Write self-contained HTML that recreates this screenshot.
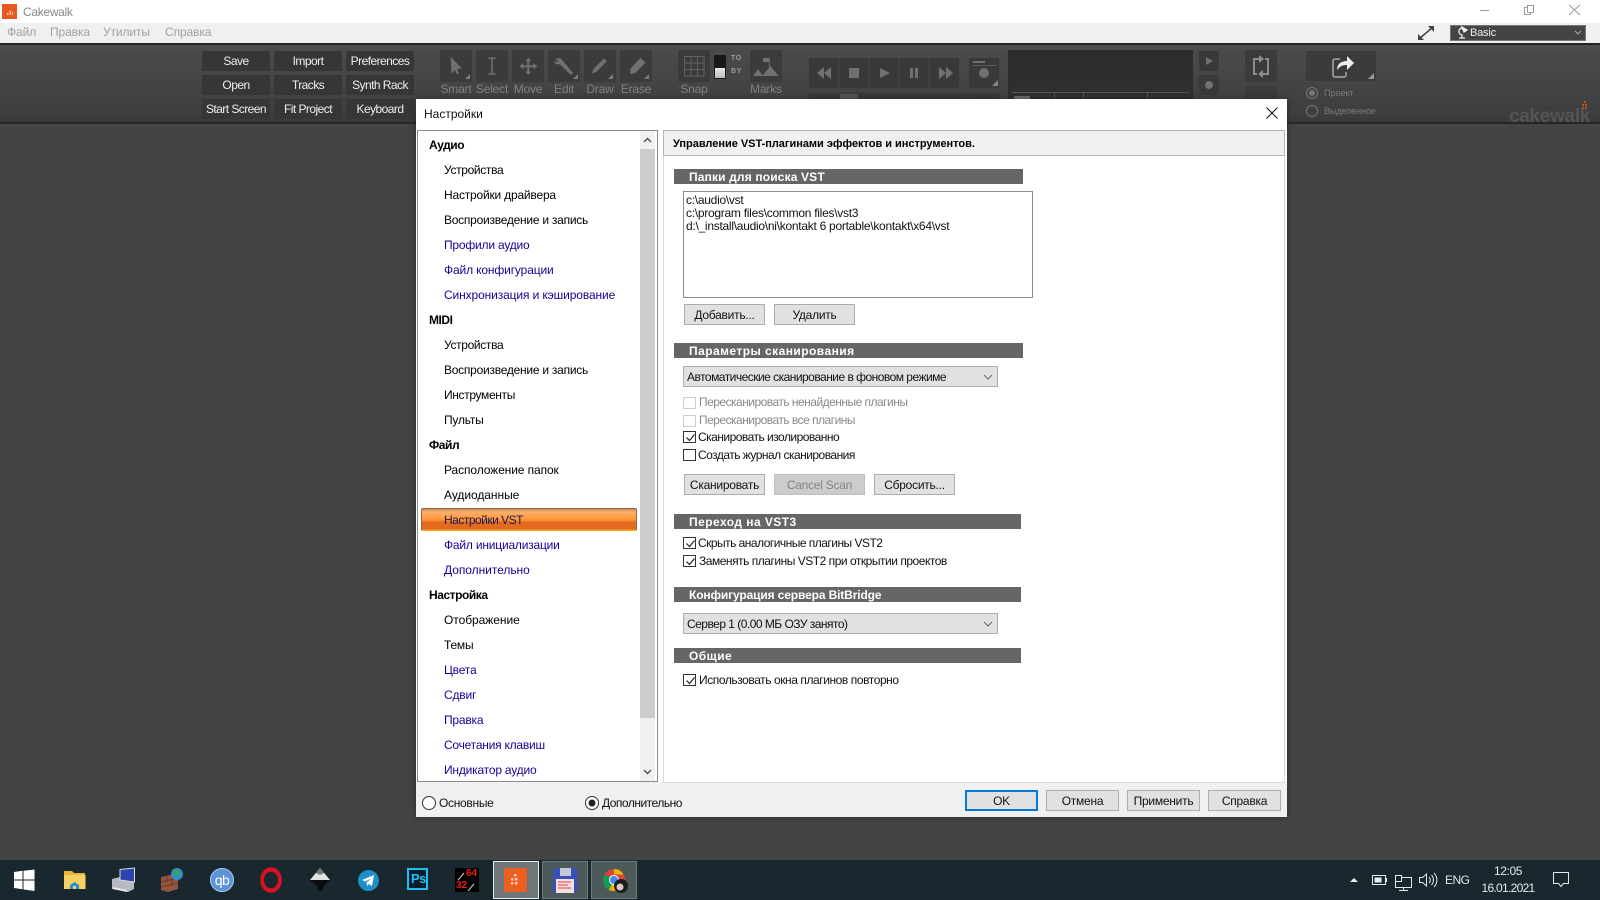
<!DOCTYPE html>
<html><head><meta charset="utf-8"><title>Cakewalk</title>
<style>
html,body{margin:0;padding:0;width:1600px;height:900px;overflow:hidden;background:#444}
*{box-sizing:border-box}
body{font-family:"Liberation Sans",sans-serif;font-size:12px;color:#000;position:relative}
.a,.t,.b,.tb,.li,.h,.sec,.btn,.cb,.cl,.lb{position:absolute;white-space:nowrap}
.tb{width:68px;height:20px;background:#343638;border-radius:2px;color:#eee;text-align:center;line-height:20px;font-size:12px;letter-spacing:-.55px}
.tool{position:absolute;top:50px;width:32px;height:32px;background:#393b3d;border-radius:2px}
.lb{top:83px;color:#808283;font-size:12px;line-height:13px;text-align:center;letter-spacing:-.2px;width:44px}
.li{left:444px;font-size:12px;line-height:14px;letter-spacing:-.2px;color:#000;transform:translateY(-7px)}
.li.p{color:#1a0098}
.h{left:429px;font-weight:bold;font-size:12px;line-height:14px;letter-spacing:-.45px;transform:translateY(-7px)}
.sec{left:674px;height:15px;background:#666;color:#fff;font-weight:bold;font-size:12px;line-height:17px;padding-left:15px;letter-spacing:.45px}
.btn{height:21px;background:#e1e1e1;border:1px solid #adadad;text-align:center;line-height:21px;font-size:12px;letter-spacing:-.25px;color:#111}
.cb{left:683px;width:315px;height:21px;background:#e1e1e1;border:1px solid #adadad;line-height:21px;padding-left:3px;letter-spacing:-.52px;color:#111}
.cb svg{position:absolute;right:2px;top:3px}
.cl{left:699px;line-height:14px;letter-spacing:-.52px;color:#111;transform:translateY(-7px)}
.cl.d{color:#888}
.x{position:absolute;left:683px;width:13px;height:12px;background:#fff;border:1px solid #333}
.x.d{border-color:#ccc}
.x svg{position:absolute;left:1px;top:0}
.ti{position:absolute;top:864px}
</style></head><body>

<!-- title bar -->
<div class="a" style="left:0;top:0;width:1600px;height:23px;background:#fff"></div>
<div class="a" style="left:2px;top:4px;width:15px;height:15px;background:#e9581f"></div>
<svg class="a" style="left:2px;top:4px" width="15" height="15"><path d="M5 9h1.500v2H5zM7.500 6.500H9V11H7.500zM10 8h1v3h-1z" fill="#f8c8a8"/></svg>
<div class="t" style="left:23px;top:5px;color:#8a8a8a;line-height:14px;letter-spacing:-.3px">Cakewalk</div>
<svg class="a" style="left:1480px;top:3px" width="110" height="18" fill="none" stroke="#999"><path d="M0 7.500h9M47.500 2.500h6v7h-6zM47.500 4.500h-3v7h6v-2M89 2l11 10M100 2L89 12"/></svg>

<!-- menu -->
<div class="a" style="left:0;top:23px;width:1600px;height:20px;background:#f0f0f0"></div>
<div class="t" style="left:7px;top:25px;color:#a0a0a0;line-height:14px;letter-spacing:-.1px">Файл</div>
<div class="t" style="left:50px;top:25px;color:#a0a0a0;line-height:14px;letter-spacing:-.1px">Правка</div>
<div class="t" style="left:103px;top:25px;color:#a0a0a0;line-height:14px;letter-spacing:-.1px">Утилиты</div>
<div class="t" style="left:165px;top:25px;color:#a0a0a0;line-height:14px;letter-spacing:-.1px">Справка</div>
<svg class="a" style="left:1417px;top:25px" width="18" height="16" fill="none" stroke="#444" stroke-width="1.500"><path d="M2 14L16 2"/><path d="M11 1h6v6L11 1zM1 9v6h6L1 9z" fill="#444" stroke="none"/></svg>
<div class="a" style="left:1450px;top:25px;width:136px;height:16px;background:#444;border:1px solid #777;color:#eee;line-height:14px;padding-left:19px;font-size:11px;letter-spacing:-.2px">Basic</div>
<svg class="a" style="left:1456px;top:26px" width="12" height="14" fill="none" stroke="#eee" stroke-width="1.300"><path d="M3 12h6M6 12V9C2 8 2 4 5 2l4 3"/><path d="M6 1l5 3-3 2z" fill="#eee"/></svg>
<svg class="a" style="left:1574px;top:30px" width="8" height="6" fill="none" stroke="#aaa"><path d="M1 1l3 3 3-3"/></svg>

<!-- toolbar -->
<div class="a" style="left:0;top:43px;width:1600px;height:81px;background:linear-gradient(#4b4d4e 2px,#484a4b 8px,#3c3e3f 70px,#37393a);border-top:2px solid #232323;border-bottom:2px solid #262626"></div>

<div class="tb" style="left:202px;top:51px">Save</div><div class="tb" style="left:274px;top:51px">Import</div><div class="tb" style="left:346px;top:51px">Preferences</div>
<div class="tb" style="left:202px;top:75px">Open</div><div class="tb" style="left:274px;top:75px">Tracks</div><div class="tb" style="left:346px;top:75px">Synth Rack</div>
<div class="tb" style="left:202px;top:99px">Start Screen</div><div class="tb" style="left:274px;top:99px">Fit Project</div><div class="tb" style="left:346px;top:99px">Keyboard</div>

<div class="tool" style="left:440px"></div><div class="tool" style="left:476px"></div><div class="tool" style="left:512px"></div><div class="tool" style="left:548px"></div><div class="tool" style="left:584px"></div><div class="tool" style="left:620px"></div><div class="tool" style="left:678px"></div><div class="tool" style="left:750px"></div>
<svg class="a" style="left:430px;top:45px" width="360" height="40" fill="#6f7172" stroke="none">
 <path d="M20.700 11.700L31.700 23.500 27 24l2 4.500-2 1-2-4.500-3.500 3.500z"/>
 <path d="M58.300 13.200h7.400M58.300 29h7.400M62 13.200V29" stroke="#6f7172" stroke-width="1.500" fill="none"/>
 <path d="M98.300 12.700l3 3.500h-2v4h4v-2l4 3-4 3v-2h-4v4.300h2l-3 3.500-3-3.500h2V22.200h-4v2l-4-3 4-3v2h4v-4h-2z"/>
 <path d="M125 15c2.500-2.500 6-2.500 7.500.5l10.500 12.500-2 2L129.500 19c-2.500 1-5 0-5.500-3l3 1.300 1.500-1.800z"/>
 <path d="M162 28.500l1.500-4.500L174 13.500l2.800 2.800L166.300 27z"/>
 <path d="M200 29l.5-5.500L210.500 13l5 4.500-10 10.500z"/>
 <path d="M35 34l5-5v5zM143 34l5-5v5zM178 34l5-5v5zM214 34l5-5v5z" fill="#7c7e7f"/>
 <path d="M254.500 11.500h19.500v19.500h-19.500zM261 11.500V31M267.500 11.500V31M254.500 18h19.500M254.500 24.500h19.500" stroke="#5f6162" fill="none"/>
 <path d="M333 13h6v4h-6z"/><path d="M339 13h.8v10H339z"/><path d="M332 31l8.500-10 8 10zM323 31l5-7 5 7z"/>
</svg>
<div class="a" style="left:714px;top:55px;width:12px;height:24px;background:#17181a;border-radius:1px"></div>
<div class="a" style="left:715px;top:68px;width:10px;height:10px;background:linear-gradient(#e8e8e8,#bbb)"></div>
<div class="t" style="left:731px;top:54px;font-size:7px;line-height:9px;color:#9a9c9d;font-weight:bold;letter-spacing:.6px">TO</div>
<div class="t" style="left:731px;top:67px;font-size:7px;line-height:9px;color:#9a9c9d;font-weight:bold;letter-spacing:.6px">BY</div>
<div class="lb" style="left:434px">Smart</div><div class="lb" style="left:470px">Select</div><div class="lb" style="left:506px">Move</div><div class="lb" style="left:542px">Edit</div><div class="lb" style="left:578px">Draw</div><div class="lb" style="left:614px">Erase</div><div class="lb" style="left:672px">Snap</div><div class="lb" style="left:744px">Marks</div>

<div class="a" style="left:809px;top:58px;width:150px;height:30px;background:#38393b;border-radius:2px"></div>
<div class="a" style="left:969px;top:58px;width:30px;height:30px;background:#38393b;border-radius:2px"></div>
<svg class="a" style="left:809px;top:58px" width="190" height="30" fill="#6e7071">
 <path d="M29.500 0h1v30h-1zM59.500 0h1v30h-1zM89.500 0h1v30h-1zM119.500 0h1v30h-1z" fill="#46484a"/>
 <path d="M15 9l-7 6 7 6zM22 9l-7 6 7 6z"/><path d="M40 10h10v10H40z"/><path d="M71 10l10 5-10 5z"/><path d="M101 10h3v10h-3zM106 10h3v10h-3z"/><path d="M130 9l7 6-7 6zM137 9l7 6-7 6z"/>
 <circle cx="175" cy="15" r="5"/><path d="M164 3h12v2h-12z"/><path d="M164 7h24v1h-24z" fill="#5a5c5d"/><path d="M183 28l6-6v6z" fill="#888"/>
</svg>
<div class="a" style="left:809px;top:93px;width:158px;height:8px;background:#38393b"></div>
<div class="a" style="left:840px;top:94px;width:18px;height:6px;background:#555"></div>
<div class="a" style="left:969px;top:93px;width:30px;height:8px;background:#38393b"></div>
<div class="a" style="left:1008px;top:50px;width:185px;height:52px;background:linear-gradient(#2a2b2c,#2f3031);border:1px solid #2c2d2e"></div>
<div class="a" style="left:1012px;top:92px;width:177px;height:1px;background:#555"></div>
<div class="a" style="left:1054px;top:92px;width:1px;height:8px;background:#555"></div>
<div class="a" style="left:1083px;top:92px;width:1px;height:8px;background:#555"></div>
<div class="a" style="left:1147px;top:92px;width:1px;height:8px;background:#555"></div>
<div class="a" style="left:1014px;top:96px;width:16px;height:3px;background:#6a6a6a"></div>
<div class="a" style="left:1199px;top:51px;width:20px;height:20px;background:#38393b;border-radius:2px"></div>
<div class="a" style="left:1199px;top:75px;width:20px;height:20px;background:#38393b;border-radius:2px"></div>
<svg class="a" style="left:1199px;top:51px" width="20" height="44" fill="#6e7071"><path d="M7 6l7 4-7 4z"/><circle cx="10" cy="34" r="4"/></svg>
<div class="a" style="left:1245px;top:50px;width:32px;height:32px;background:#393b3d;border-radius:2px"></div>
<div class="a" style="left:1245px;top:86px;width:32px;height:16px;background:#393b3d;border-radius:2px"></div>
<svg class="a" style="left:1245px;top:50px" width="32" height="32" fill="none" stroke="#8a8c8d" stroke-width="2"><path d="M14 9H9v15h3M18 24h5V9h-3"/><path d="M14 5l5 4-5 4z M18 28l-5-4 5-4z" fill="#8a8c8d" stroke="none"/></svg>
<div class="a" style="left:1306px;top:51px;width:70px;height:30px;background:#393b3d;border-radius:2px"></div>
<svg class="a" style="left:1306px;top:51px" width="70" height="30"><path d="M34 8h-5a2 2 0 00-2 2v14a2 2 0 002 2h9a2 2 0 002-2v-3" fill="none" stroke="#aaa" stroke-width="1.500"/><path d="M31 19c0-6 4-9 10-9V5l7 7-7 7v-5c-4 0-7 1-10 5z" fill="#eee"/><path d="M62 28l6-6v6z" fill="#999"/></svg>
<svg class="a" style="left:1305px;top:85px" width="16" height="34" fill="none" stroke="#777"><circle cx="7" cy="8" r="5.500"/><circle cx="7" cy="8" r="3" fill="#777" stroke="none"/><circle cx="7" cy="26" r="5.500"/></svg>
<div class="t" style="left:1324px;top:87px;font-size:9px;line-height:12px;color:#7a7c7d">Проект</div>
<div class="t" style="left:1324px;top:105px;font-size:9px;line-height:12px;color:#7a7c7d;letter-spacing:-.1px">Выделенное</div>
<div class="t" style="left:1509px;top:106px;font-size:19px;line-height:22px;color:#525455;letter-spacing:-.3px;font-weight:bold">cakewalk</div>
<svg class="a" style="left:1582px;top:101px" width="6" height="9" fill="#b05a20"><path d="M2 0h2v2H2zM0 3h2v2H0zM3 3h2v2H3zM0 6h2v2H0zM3 6h2v2H3z"/></svg>

<!-- dialog -->
<div class="a" style="left:416px;top:99px;width:871px;height:718px;background:#fff;box-shadow:0 0 6px rgba(0,0,0,.35)"></div>
<div class="t" style="left:424px;top:107px;line-height:14px;font-size:12px;color:#111">Настройки</div>
<svg class="a" style="left:1266px;top:107px" width="12" height="12" fill="none" stroke="#111"><path d="M.5.5l11 11M11.500.5l-11 11"/></svg>
<div class="a" style="left:416px;top:782px;width:871px;height:35px;background:#f0f0f0"></div>
<div class="a" style="left:417px;top:130px;width:241px;height:652px;border:1px solid #8c8c8c;border-bottom-width:1px;background:#fff"></div>
<div class="a" style="left:640px;top:131px;width:15px;height:650px;background:#f0f0f0"></div>
<div class="a" style="left:640px;top:149px;width:15px;height:569px;background:#cdcdcd"></div>
<svg class="a" style="left:640px;top:131px" width="15" height="650" fill="none" stroke="#555" stroke-width="1.500"><path d="M4 11l3.500-3.500L11 11M4 639l3.500 3.500L11 639"/></svg>

<div class="h" style="top:145px">Аудио</div>
<div class="li" style="top:170px;letter-spacing:-.35px">Устройства</div>
<div class="li" style="top:195px">Настройки драйвера</div>
<div class="li" style="top:220px;letter-spacing:-.25px">Воспроизведение и запись</div>
<div class="li p" style="top:245px">Профили аудио</div>
<div class="li p" style="top:270px;letter-spacing:-.14px">Файл конфигурации</div>
<div class="li p" style="top:295px;letter-spacing:-.12px">Синхронизация и кэширование</div>
<div class="h" style="top:320px">MIDI</div>
<div class="li" style="top:345px;letter-spacing:-.35px">Устройства</div>
<div class="li" style="top:370px;letter-spacing:-.25px">Воспроизведение и запись</div>
<div class="li" style="top:395px;letter-spacing:-.35px">Инструменты</div>
<div class="li" style="top:420px">Пульты</div>
<div class="h" style="top:445px">Файл</div>
<div class="li" style="top:470px;letter-spacing:-.1px">Расположение папок</div>
<div class="li" style="top:495px;letter-spacing:-.05px">Аудиоданные</div>
<div class="a" style="left:421px;top:508px;width:216px;height:23px;background:linear-gradient(#c98a55 0,#fdae6d 3px,#ff9c3e 9px,#f78a2a 12px,#e2691f 13px,#e46a1e 20px,#f9a01b 21px,#fbb016 23px);border:1px solid #8d6b48;border-bottom-color:#f4a80f;border-radius:2px"></div>
<div class="li" style="top:520px;color:#1c1a5c;letter-spacing:-.5px">Настройки VST</div>
<div class="li p" style="top:545px">Файл инициализации</div>
<div class="li p" style="top:570px;letter-spacing:-.05px">Дополнительно</div>
<div class="h" style="top:595px">Настройка</div>
<div class="li" style="top:620px;letter-spacing:-.05px">Отображение</div>
<div class="li" style="top:645px">Темы</div>
<div class="li p" style="top:670px">Цвета</div>
<div class="li p" style="top:695px">Сдвиг</div>
<div class="li p" style="top:720px">Правка</div>
<div class="li p" style="top:745px;letter-spacing:-.23px">Сочетания клавиш</div>
<div class="li p" style="top:770px">Индикатор аудио</div>

<!-- right panel -->
<div class="a" style="left:663px;top:130px;width:622px;height:653px;background:#fff;border-left:1px solid #d9d9d9;border-bottom:1px solid #d9d9d9;border-right:1px solid #d9d9d9"></div>
<div class="a" style="left:663px;top:130px;width:622px;height:26px;background:#f0f0f0;border:1px solid #b4b4b4;border-bottom:1px solid #b4b4b4"></div>
<div class="t" style="left:673px;top:137px;font-weight:bold;font-size:11px;line-height:14px;letter-spacing:-.02px">Управление VST-плагинами эффектов и инструментов.</div>

<div class="sec" style="top:169px;width:349px;letter-spacing:.15px">Папки для поиска VST</div>
<div class="a" style="left:683px;top:191px;width:350px;height:107px;border:1px solid #8c8c8c;background:#fff"></div>
<div class="t" style="left:686px;top:194px;line-height:13px;letter-spacing:-.27px;color:#111">c:\audio\vst<br>c:\program files\common files\vst3<br>d:\_install\audio\ni\kontakt 6 portable\kontakt\x64\vst</div>
<div class="btn" style="left:684px;top:304px;width:81px">Добавить...</div>
<div class="btn" style="left:774px;top:304px;width:81px">Удалить</div>

<div class="sec" style="top:343px;width:349px">Параметры сканирования</div>
<div class="cb" style="top:366px">Автоматические сканирование в фоновом режиме<svg width="14" height="14" fill="none" stroke="#666"><path d="M3 5l4 4 4-4"/></svg></div>
<div class="x d" style="top:397px"></div><div class="cl d" style="top:402px">Пересканировать ненайденные плагины</div>
<div class="x d" style="top:415px"></div><div class="cl d" style="top:420px">Пересканировать все плагины</div>
<div class="x" style="top:431px"><svg width="11" height="11" fill="none" stroke="#222" stroke-width="1.200"><path d="M1.500 5.500l3 3 5-6"/></svg></div><div class="cl" style="left:698px;top:437px">Сканировать изолированно</div>
<div class="x" style="top:449px"></div><div class="cl" style="left:698px;top:455px">Создать журнал сканирования</div>
<div class="btn" style="left:684px;top:474px;width:81px">Сканировать</div>
<div class="btn" style="left:774px;top:474px;width:91px;background:#ccc;color:#838383;border-color:#bfbfbf">Cancel Scan</div>
<div class="btn" style="left:874px;top:474px;width:81px">Сбросить...</div>

<div class="sec" style="top:514px;width:347px">Переход на VST3</div>
<div class="x" style="top:537px"><svg width="11" height="11" fill="none" stroke="#222" stroke-width="1.200"><path d="M1.500 5.500l3 3 5-6"/></svg></div><div class="cl" style="left:698px;top:543px">Скрыть аналогичные плагины VST2</div>
<div class="x" style="top:555px"><svg width="11" height="11" fill="none" stroke="#222" stroke-width="1.200"><path d="M1.500 5.500l3 3 5-6"/></svg></div><div class="cl" style="top:561px;letter-spacing:-.48px">Заменять плагины VST2 при открытии проектов</div>

<div class="sec" style="top:587px;width:347px;letter-spacing:-.13px">Конфигурация сервера BitBridge</div>
<div class="cb" style="top:613px">Сервер 1 (0.00 МБ ОЗУ занято)<svg width="14" height="14" fill="none" stroke="#666"><path d="M3 5l4 4 4-4"/></svg></div>

<div class="sec" style="top:648px;width:347px">Общие</div>
<div class="x" style="top:674px"><svg width="11" height="11" fill="none" stroke="#222" stroke-width="1.200"><path d="M1.500 5.500l3 3 5-6"/></svg></div><div class="cl" style="top:680px;letter-spacing:-.43px">Использовать окна плагинов повторно</div>

<!-- footer -->
<svg class="a" style="left:421px;top:795px" width="180" height="16" fill="#fff" stroke="#333"><circle cx="8" cy="8" r="6.500"/><circle cx="171" cy="8" r="6.500"/><circle cx="171" cy="8" r="3.500" fill="#222" stroke="none"/></svg>
<div class="t" style="left:439px;top:796px;line-height:14px;color:#111;letter-spacing:-.3px">Основные</div>
<div class="t" style="left:602px;top:796px;line-height:14px;color:#111;letter-spacing:-.5px">Дополнительно</div>
<div class="btn" style="left:965px;top:790px;width:73px;border:2px solid #0078d7;line-height:18px">OK</div>
<div class="btn" style="left:1046px;top:790px;width:73px;line-height:20px">Отмена</div>
<div class="btn" style="left:1127px;top:790px;width:73px;line-height:20px">Применить</div>
<div class="btn" style="left:1208px;top:790px;width:73px;line-height:20px">Справка</div>

<!-- taskbar -->
<div class="a" style="left:0;top:860px;width:1600px;height:40px;background:#18282e"></div>
<div class="a" style="left:493px;top:861px;width:46px;height:38px;background:#6d7777;border:1px solid #e8eded"></div>
<div class="a" style="left:542px;top:861px;width:46px;height:38px;background:#4d5a5c;border:1px solid #6c7a7a"></div>
<div class="a" style="left:591px;top:861px;width:46px;height:38px;background:#4d5a5c;border:1px solid #6c7a7a"></div>

<svg class="a" style="left:0;top:860px" width="660" height="40">
 <path d="M14 12l8.500-1.200v8.700H14zM23.500 10.700l11-1.200v10H23.500zM14 20.500h8.500v8.700L14 28zM23.500 20.500h11V31l-11-1.500z" fill="#fff"/>
 <path d="M64 11h8l2 2h11v4H64z" fill="#e8b73a"/><path d="M64 15h21.500v14H64z" fill="#f6d263"/><path d="M70 29v-4l4.500-3 4.500 3v4h-3v-3h-3v3z" fill="#2a8fd8"/>
 <path d="M112 19l8-2 14 3v9l-6 3-16-3z" fill="#b4babf"/><path d="M120 9.500L134.500 8v14l-14.500-2z" fill="#2b44b0" stroke="#d8d8d8"/><path d="M113 27l14 3v2l-14-3z" fill="#e8e8e8"/>
 <path d="M161 17l17-4v16l-10 3-7-2z" fill="#96553f"/><path d="M161 22l17-4M161 27l17-4M167 16v6M172 20v6" stroke="#6b3a2a"/><circle cx="177" cy="14" r="6" fill="#2f90c8"/><path d="M173 12c3-3 6-2 7 1l-4 3z" fill="#3fa53c"/>
 <circle cx="222" cy="20" r="12" fill="#5d94d9"/><circle cx="222" cy="20" r="11.500" fill="none" stroke="#a8c6ea"/>
 <circle cx="271" cy="20" r="10.500" fill="none" stroke="#d81225" stroke-width="4.500" transform="matrix(.85 0 0 1 40.700 0)"/>
 <path d="M320 8l10 12h-20z" fill="#e4e4e4"/><path d="M309.500 20h21l-5 4-2 2-1 5h-4l-1-5-3-2z" fill="#0c0c0c"/><path d="M320 8l4 5-4 2-4-2z" fill="#777"/>
 <circle cx="368.500" cy="20.500" r="10.500" fill="#1e8fcb"/><path d="M362 20l12-5-2 11-3-2-2 2-.5-3.500 5-4-6.500 3z" fill="#fff"/>
 <rect x="408" y="9" width="19" height="20" fill="#061e2e" stroke="#1ec0f5" stroke-width="2"/>
 <rect x="455" y="8" width="24" height="24" fill="#000"/><path d="M458 20l6-7M468 31l6-7" stroke="#ccc" fill="none"/>
 <rect x="504" y="8" width="23" height="24" fill="#ee5e20"/><path d="M514 14h2.500v2.500H514zM511 18h2.500v2.500H511zM515 18h2.500v2.500H515zM511 22h2.500v2.500H511zM515 22h2.500v2.500H515z" fill="#fbd3ba"/>
 <rect x="553" y="8" width="24" height="25" rx="1" fill="#3650b8"/><rect x="560" y="8" width="11" height="8" fill="#c4c9d6"/><rect x="556" y="19" width="18" height="14" fill="#f2e0e0"/><path d="M558 22h13M558 25h10M558 28h13" stroke="#e23b3b"/>
 <circle cx="614" cy="20" r="11" fill="#db4437"/><path d="M614 20l-9.500-5.500A11 11 0 00609 30z" fill="#0f9d58"/><path d="M614 9a11 11 0 019.500 5.500H614zM614 20l7 8A11 11 0 01609 30z" fill="#f4b400"/><circle cx="614" cy="20" r="4.500" fill="#4285f4" stroke="#fff"/>
 <circle cx="621" cy="26" r="7" fill="#1c1c1c"/><circle cx="620" cy="27" r="3.500" fill="#d8c8c0"/>
</svg>
<div class="t" style="left:210px;top:868px;width:24px;text-align:center;color:#fff;font-size:14px;line-height:24px;letter-spacing:-.5px">qb</div>
<div class="t" style="left:411px;top:871px;font-weight:bold;font-size:13px;line-height:16px;color:#1ec0f5;letter-spacing:-.5px">Ps</div>
<div class="t" style="left:466px;top:868px;font-weight:bold;font-size:10px;line-height:11px;color:#f01818">64</div>
<div class="t" style="left:456px;top:880px;font-weight:bold;font-size:10px;line-height:11px;color:#f01818">32</div>

<svg class="a" style="left:1345px;top:860px" width="240" height="40" fill="none" stroke="#e8e8e8">
 <path d="M5 22l4-4 4 4z" fill="#eee" stroke="none"/>
 <rect x="27.500" y="15.500" width="13" height="9"/><rect x="29.500" y="17.500" width="7" height="5" fill="#eee" stroke="none"/><path d="M41 18v4" stroke-width="2"/>
 <path d="M50.500 15.500h6v6h-6zM57 17.500h9.500v10h-16v-6M58.500 27.500v3M54 30.500h9"/>
 <path d="M74.500 17.500h3l4-3.500v12l-4-3.500h-3zM84 17a4 4 0 010 6M86.500 15a7.500 7.500 0 010 10M89 13a10 10 0 010 14"/>
 <path d="M208.500 12.500h15v11h-5l-2.500 3-2.500-3h-5z"/>
</svg>
<div class="t" style="left:1445px;top:873px;color:#e8e8e8;line-height:14px;font-size:12px;letter-spacing:-.5px">ENG</div>
<div class="t" style="left:1478px;top:864px;width:60px;text-align:center;color:#e8e8e8;line-height:14px;font-size:12px;letter-spacing:-.4px">12:05</div>
<div class="t" style="left:1478px;top:881px;width:60px;text-align:center;color:#e8e8e8;line-height:14px;font-size:12px;letter-spacing:-.7px">16.01.2021</div>
</body></html>
